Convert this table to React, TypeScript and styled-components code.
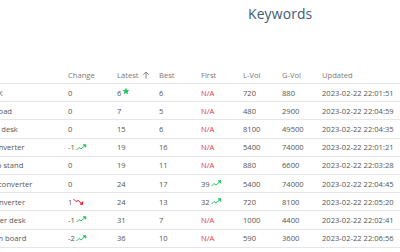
import React from 'react';
import styled, { createGlobalStyle } from 'styled-components';

interface Keyword {
  name: string;
  change: number;
  trend?: 'up' | 'down';
  latest: number;
  star?: boolean;
  best: number;
  first?: number;
  firstTrend?: 'up' | 'down';
  lVol: number;
  gVol: number;
  updated: string;
}

const keywords: Keyword[] = [
  { name: 'wireless keypad K', change: 0, latest: 6, star: true, best: 6, lVol: 720, gVol: 880, updated: '2023-02-22 22:01:51' },
  { name: 'usb-c hub download', change: 0, latest: 7, best: 5, lVol: 480, gVol: 2900, updated: '2023-02-22 22:04:59' },
  { name: 'ergonomic office desk', change: 0, latest: 15, best: 6, lVol: 8100, gVol: 49500, updated: '2023-02-22 22:04:35' },
  { name: 'usb-c to hdmi converter', change: -1, trend: 'up', latest: 19, best: 16, lVol: 5400, gVol: 74000, updated: '2023-02-22 22:01:21' },
  { name: 'adjustable laptop stand', change: 0, latest: 19, best: 11, lVol: 880, gVol: 6600, updated: '2023-02-22 22:03:28' },
  { name: 'mini dp to hdmi converter', change: 0, latest: 24, best: 17, first: 39, firstTrend: 'up', lVol: 5400, gVol: 74000, updated: '2023-02-22 22:04:45' },
  { name: 'usb to display converter', change: 1, trend: 'down', latest: 24, best: 13, first: 32, firstTrend: 'up', lVol: 720, gVol: 8100, updated: '2023-02-22 22:05:20' },
  { name: 'standing computer desk', change: -1, trend: 'up', latest: 31, best: 7, lVol: 1000, gVol: 4400, updated: '2023-02-22 22:02:41' },
  { name: 'magnetic wooden board', change: -2, trend: 'up', latest: 36, best: 10, lVol: 590, gVol: 3600, updated: '2023-02-22 22:06:56' },
];

const GlobalStyle = createGlobalStyle`
  body {
    margin: 0;
    background: #ffffff;
    font-family: 'Open Sans', 'Liberation Sans', sans-serif;
    overflow: hidden;
  }
`;

const Page = styled.div`
  width: 400px;
  height: 252px;
  overflow: hidden;
`;

const Title = styled.h1`
  margin: 0;
  padding: 4px 0 0 248px;
  height: 63px;
  font-size: 13.9px;
  font-weight: 500;
  color: #3e5b74;
  letter-spacing: 0.15px;
`;

const Table = styled.div`
  margin-left: -60px;
`;

const Row = styled.div<{ $header?: boolean }>`
  display: grid;
  grid-template-columns: 128px 49px 42px 42px 42px 39px 40px 110px;
  align-items: center;
  height: ${(p) => (p.$header ? '16px' : '17.2px')};
  border-bottom: 1px solid #e6e6e6;
  font-size: 7.6px;
  color: ${(p) => (p.$header ? '#7a7a7a' : '#555555')};
  white-space: nowrap;
`;

const Cell = styled.div<{ $na?: boolean }>`
  display: flex;
  align-items: center;
  overflow: hidden;
  color: ${(p) => (p.$na ? '#e0393e' : 'inherit')};
`;

const NameCell = styled(Cell)`
  color: #555555;
`;

const TrendIcon = ({ dir }: { dir: 'up' | 'down' }) => (
  <svg width="11" height="7" viewBox="0 0 11 7" style={{ marginLeft: 1 }}>
    {dir === 'up' ? (
      <g stroke="#22c55e" strokeWidth="1" fill="none">
        <polyline points="0.5,6 3,3.5 5,5 9.5,1" />
        <polyline points="7,0.8 9.8,0.8 9.8,3.4" fill="#22c55e" />
      </g>
    ) : (
      <g stroke="#e11d2e" strokeWidth="1" fill="none">
        <polyline points="0.5,1 3,3.5 5,2.5 9.5,6" />
        <polyline points="7,6.2 9.8,6.2 9.8,3.6" fill="#e11d2e" />
      </g>
    )}
  </svg>
);

const Star = () => (
  <svg width="8" height="8" viewBox="0 0 24 24" style={{ marginLeft: 0.5, marginTop: -3 }}>
    <path
      d="M12 2l3 6.9 7.5.7-5.7 5 1.7 7.4L12 18.2 5.5 22l1.7-7.4-5.7-5 7.5-.7z"
      fill="#22c55e"
    />
  </svg>
);

const SortArrow = () => (
  <svg width="8" height="8" viewBox="0 0 8 8" style={{ marginLeft: 4 }}>
    <g stroke="#7a7a7a" strokeWidth="0.9" fill="none">
      <line x1="4" y1="1" x2="4" y2="7.5" />
      <polyline points="1.3,3.7 4,1 6.7,3.7" />
    </g>
  </svg>
);

const App = () => (
  <Page>
    <GlobalStyle />
    <Title>Keywords</Title>
    <Table>
      <Row $header>
        <Cell />
        <Cell>Change</Cell>
        <Cell>
          Latest
          <SortArrow />
        </Cell>
        <Cell>Best</Cell>
        <Cell>First</Cell>
        <Cell>L-Vol</Cell>
        <Cell>G-Vol</Cell>
        <Cell>Updated</Cell>
      </Row>
      {keywords.map((k) => (
        <Row key={k.name}>
          <NameCell>{k.name}</NameCell>
          <Cell>
            {k.change}
            {k.trend && <TrendIcon dir={k.trend} />}
          </Cell>
          <Cell>
            {k.latest}
            {k.star && <Star />}
          </Cell>
          <Cell>{k.best}</Cell>
          {k.first ? (
            <Cell>
              {k.first}
              {k.firstTrend && <TrendIcon dir={k.firstTrend} />}
            </Cell>
          ) : (
            <Cell $na>N/A</Cell>
          )}
          <Cell>{k.lVol}</Cell>
          <Cell>{k.gVol}</Cell>
          <Cell>{k.updated}</Cell>
        </Row>
      ))}
    </Table>
  </Page>
);

export default App;
